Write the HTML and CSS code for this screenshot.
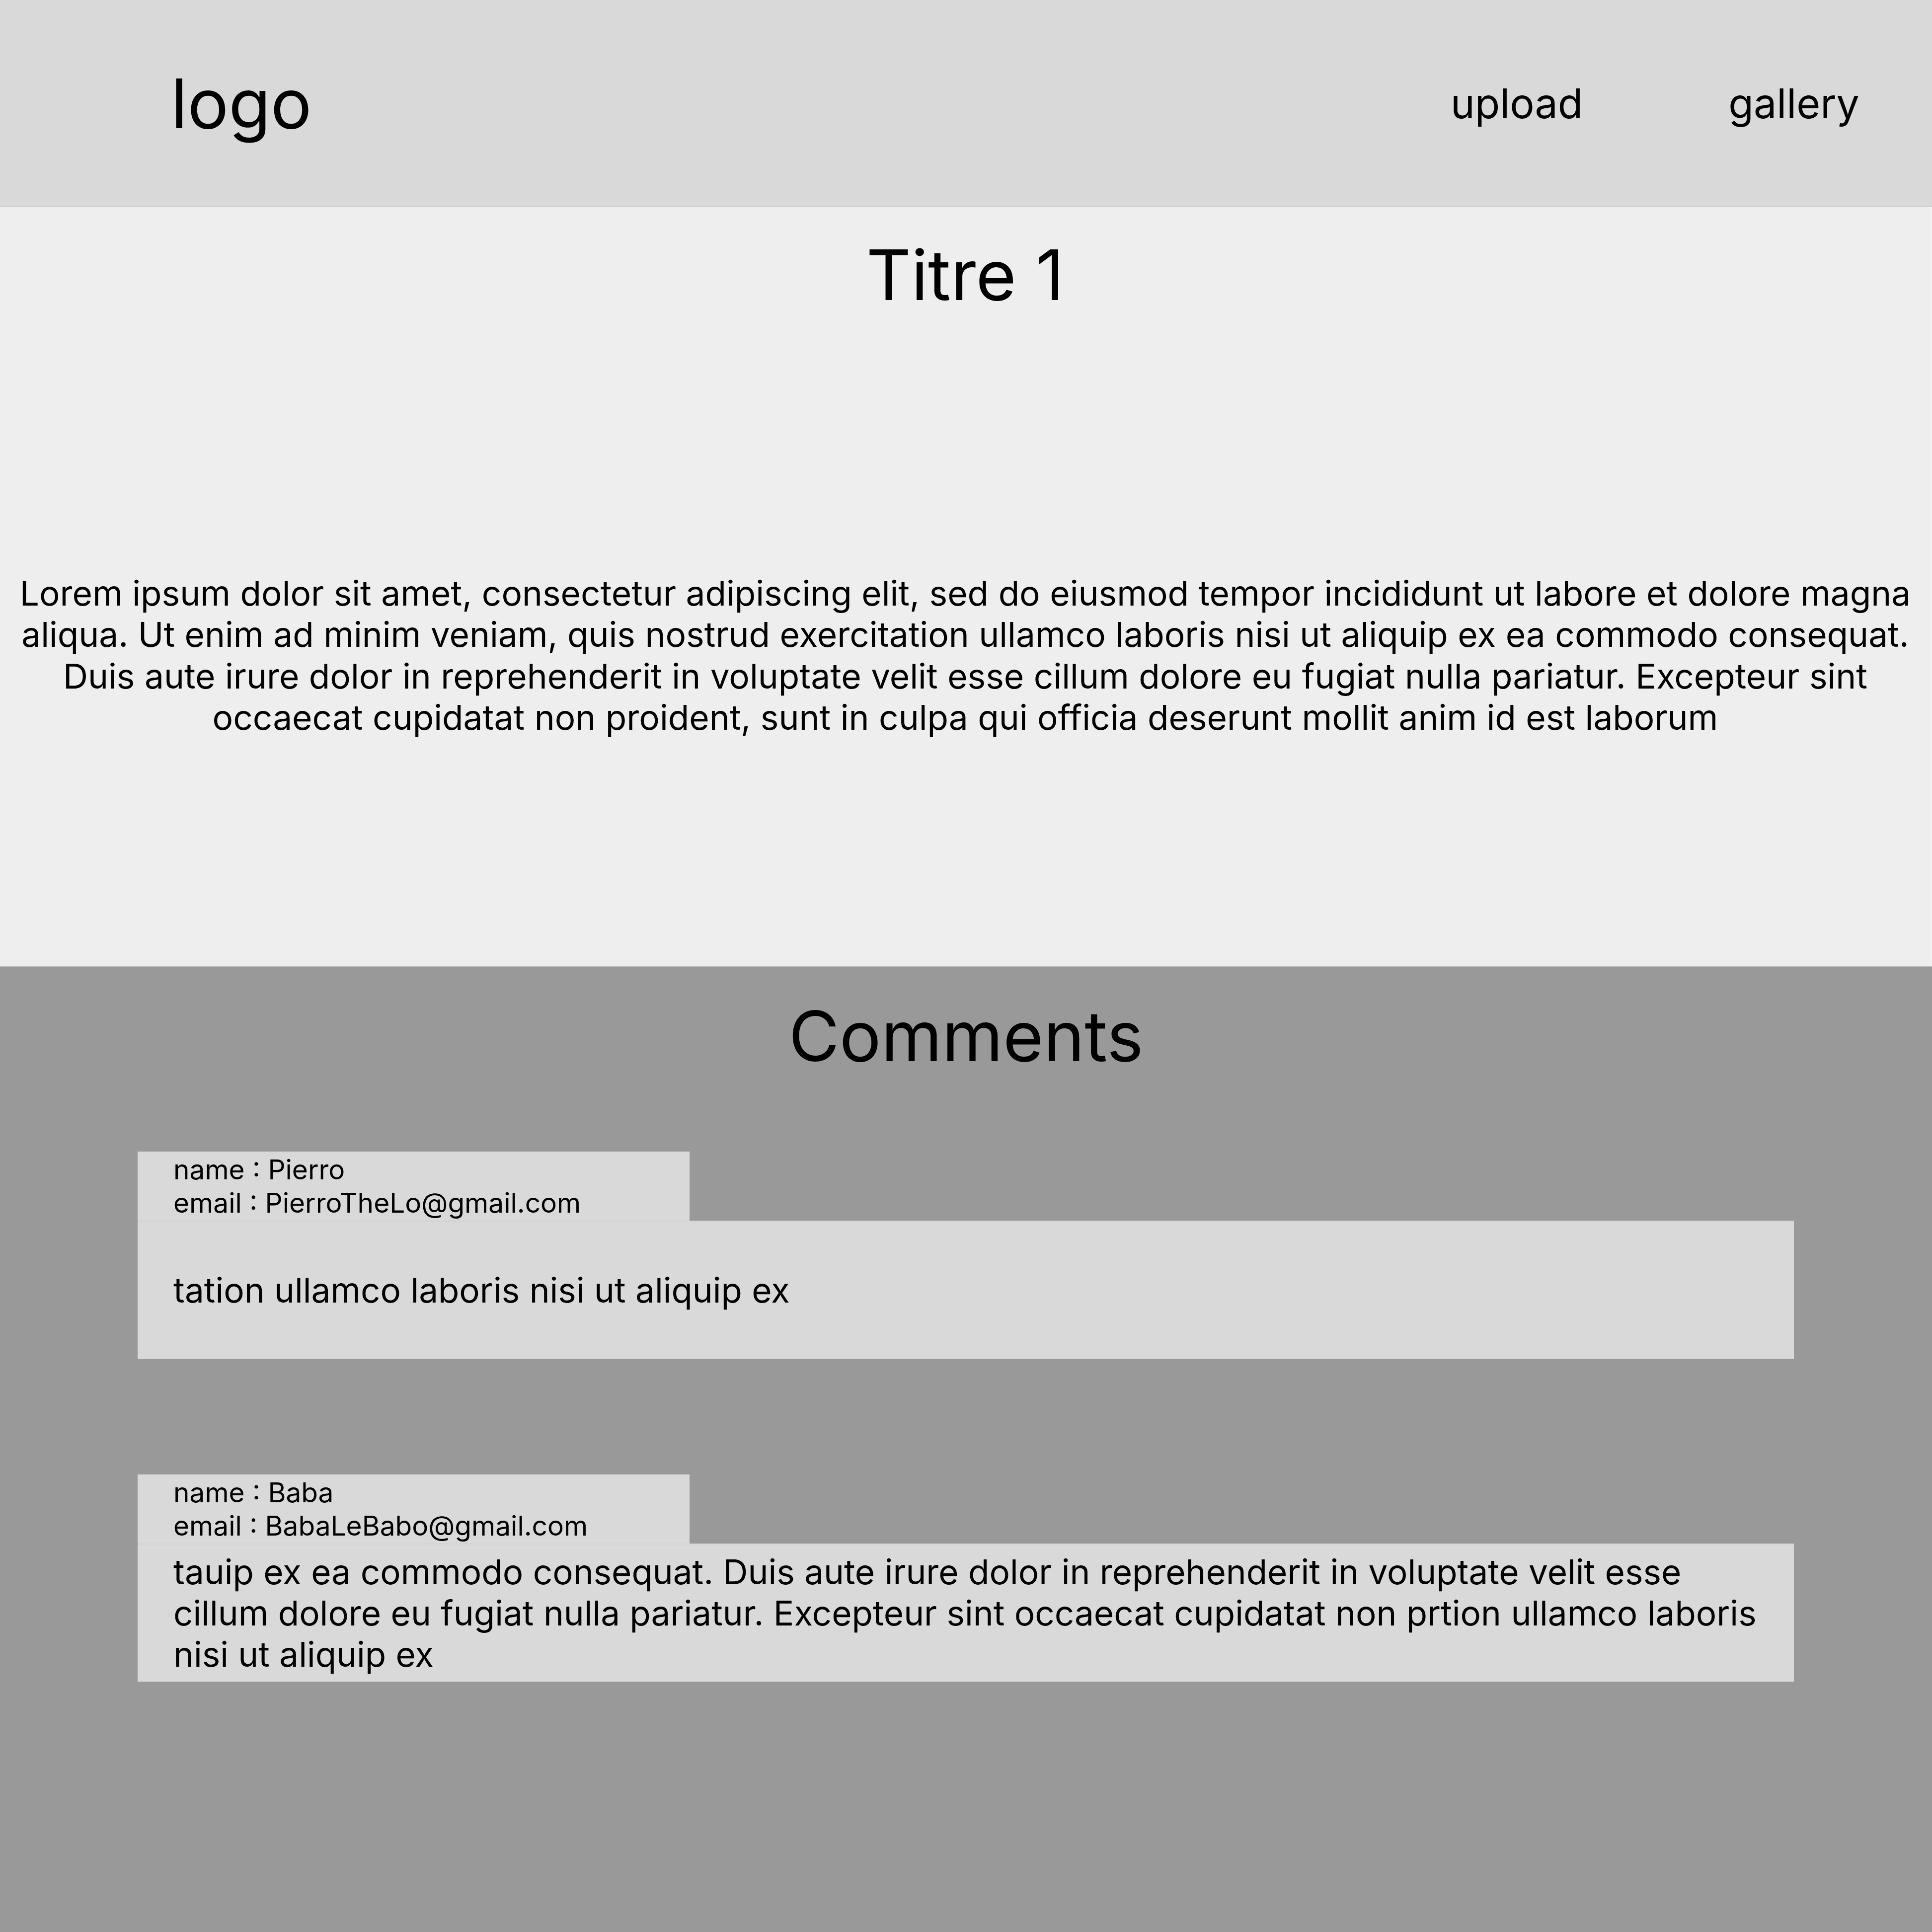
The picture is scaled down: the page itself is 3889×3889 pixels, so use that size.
FILE: index.html
```html
<!DOCTYPE html>
<html lang="fr">
<head>
<meta charset="utf-8">
<title>Titre 1</title>
<link rel="stylesheet" href="styles.css">
</head>
<body>
<header class="topbar">
  <div class="logo">logo</div>
  <nav class="nav">
    <a class="nav-link" href="#">upload</a>
    <a class="nav-link" href="#">gallery</a>
  </nav>
</header>
<main class="article">
  <h1 class="title">Titre 1</h1>
  <p class="lead">Lorem ipsum dolor sit amet, consectetur adipiscing elit, sed do eiusmod tempor incididunt ut labore et dolore magna<br>aliqua. Ut enim ad minim veniam, quis nostrud exercitation ullamco laboris nisi ut aliquip ex ea commodo consequat.<br>Duis aute irure dolor in reprehenderit in voluptate velit esse cillum dolore eu fugiat nulla pariatur. Excepteur sint<br>occaecat cupidatat non proident, sunt in culpa qui officia deserunt mollit anim id est laborum</p>
</main>
<section class="comments">
  <h2 class="comments-title">Comments</h2>
  <div class="comment-list">
    <article class="comment">
      <div class="comment-meta">
        <div>name : Pierro</div>
        <div>email : PierroTheLo@gmail.com</div>
      </div>
      <div class="comment-body">
        <p>tation ullamco laboris nisi ut aliquip ex</p>
      </div>
    </article>
    <article class="comment">
      <div class="comment-meta">
        <div>name : Baba</div>
        <div>email : BabaLeBabo@gmail.com</div>
      </div>
      <div class="comment-body">
        <p>tauip ex ea commodo consequat. Duis aute irure dolor in reprehenderit in voluptate velit esse<br>cillum dolore eu fugiat nulla pariatur. Excepteur sint occaecat cupidatat non prtion ullamco laboris<br>nisi ut aliquip ex</p>
      </div>
    </article>
  </div>
</section>
</body>
</html>
```

FILE: styles.css
```css
* {
  box-sizing: border-box;
}

html, body {
  margin: 0;
  padding: 0;
}

body {
  width: 3889px;
  min-height: 3889px;
  font-family: "Inter", "Noto Sans", "Liberation Sans", sans-serif;
  color: #000;
  background: #999999;
}

.topbar {
  height: 417px;
  background: #d9d9d9;
  border-bottom: 2px solid #d0d0d0;
  display: flex;
  align-items: center;
  justify-content: space-between;
  padding: 0 146px 0 344px;
}

.logo {
  font-size: 138px;
  line-height: normal;
}

.nav {
  display: flex;
  gap: 293px;
}

.nav-link {
  font-size: 82.5px;
  color: #000;
  text-decoration: none;
  line-height: normal;
}

.article {
  height: 1527px;
  background: #eeeeee;
  padding-top: 51px;
  text-align: center;
  border-right: 3px solid #f3f3f3;
}

.title {
  margin: 0;
  font-size: 140px;
  font-weight: 400;
  line-height: normal;
}

.lead {
  margin: 515px 0 0;
  padding: 0 6px;
  font-size: 69.4px;
  line-height: 83.3px;
}

.comments {
  background: #999999;
  min-height: 1945px;
  padding-top: 54px;
  border-top: 2px solid #bdbdbd;
}

.comments-title {
  margin: 0;
  text-align: center;
  font-size: 140px;
  font-weight: 400;
  line-height: normal;
}

.comment-list {
  margin-top: 148px;
  padding-left: 277px;
  display: flex;
  flex-direction: column;
  gap: 233px;
}

.comment-meta {
  width: 1111px;
  height: 139px;
  background: #d9d9d9;
  padding: 3px 0 0 72px;
  font-size: 55px;
  line-height: 67px;
}

.comment-body {
  width: 3334px;
  height: 278px;
  background: #d9d9d9;
  border-top: 2px solid #d1d1d1;
  padding: 0 10px 0 72px;
  display: flex;
  align-items: center;
}

.comment-body p {
  margin: 0;
  font-size: 69.2px;
  line-height: 83px;
}
```
